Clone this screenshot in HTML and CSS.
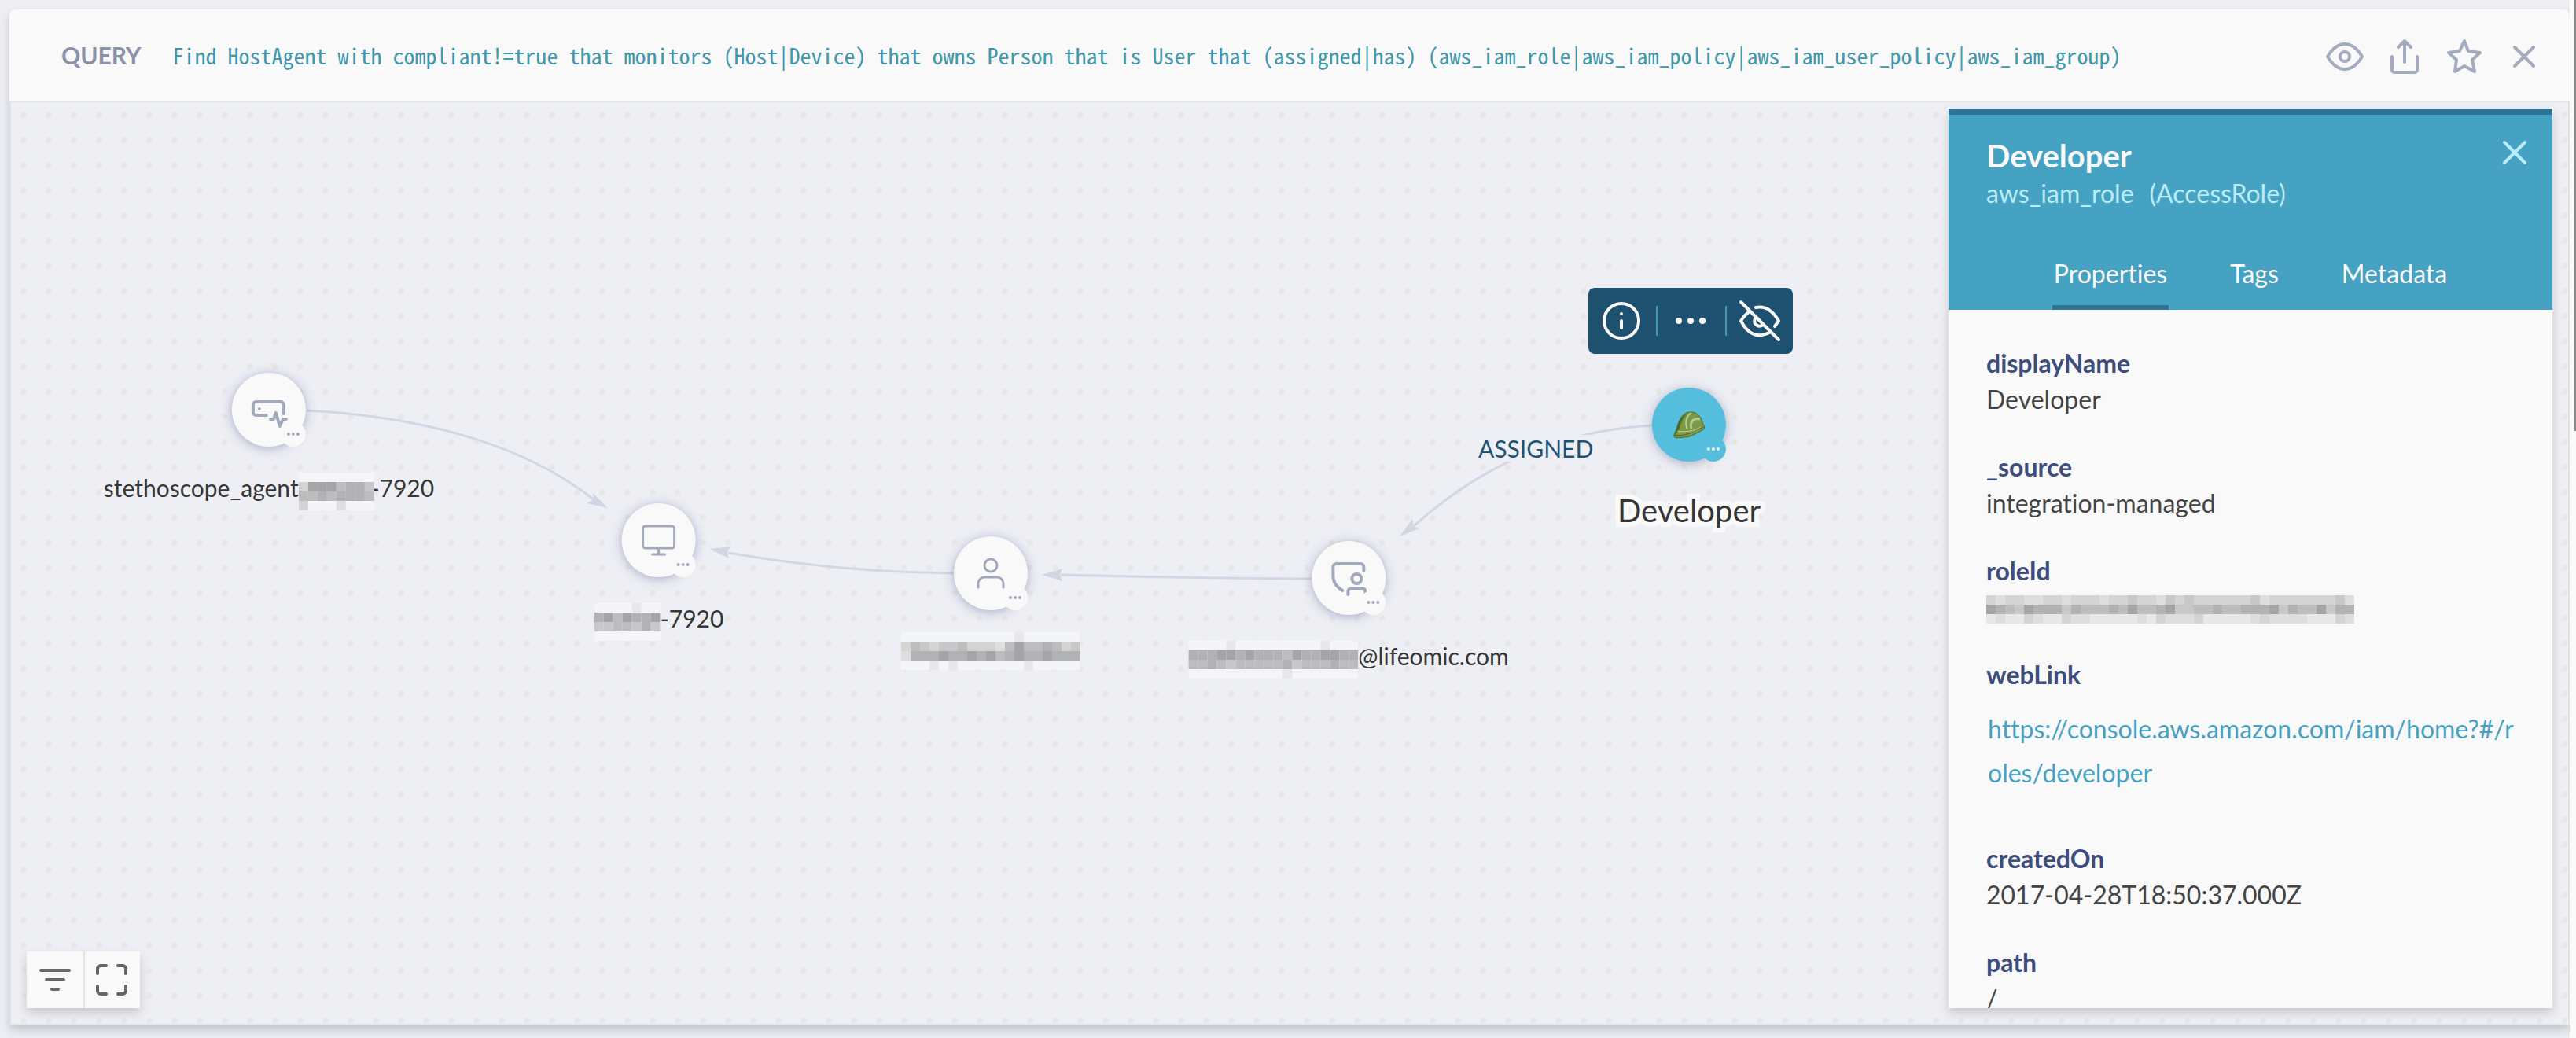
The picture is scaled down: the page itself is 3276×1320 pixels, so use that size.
FILE: index.html
```html
<!DOCTYPE html>
<html lang="en">
<head>
<meta charset="utf-8">
<title>Query graph</title>
<link rel="stylesheet" href="styles.css">
</head>
<body>
<main class="card">
  <header class="query-bar">
    <div class="query">
      <span class="query-label">QUERY</span>
      <code class="query-text">Find HostAgent with compliant!=true that monitors (Host|Device) that owns Person that is User that (assigned|has) (aws_iam_role|aws_iam_policy|aws_iam_user_policy|aws_iam_group)</code>
    </div>
    <div class="actions">
      <button class="icon-button" aria-label="Show"><svg width="48" height="48" viewBox="0 0 48 48" class="line"><path d="M2 24C8 14 15 8 24 8s16 6 22 16C40 34 33 40 24 40S8 34 2 24z"/><circle cx="24" cy="24" r="6"/></svg></button>
      <button class="icon-button" aria-label="Share"><svg width="48" height="48" viewBox="0 0 48 48" class="line"><path d="M8 24v17a3 3 0 0 0 3 3h26a3 3 0 0 0 3-3V24M24 31V4M16 12l8-8 8 8"/></svg></button>
      <button class="icon-button" aria-label="Favorite"><svg width="48" height="48" viewBox="0 0 48 48" class="line"><path d="M24 4L18 17 4 19 14 28 12 43 24 36 37 43 34 28 44 19 29 17z"/></svg></button>
      <button class="icon-button" aria-label="Close"><svg width="48" height="48" viewBox="0 0 48 48" class="line"><path d="M12 12l24 24M36 12L12 36"/></svg></button>
    </div>
  </header>

  <section class="canvas">
    <svg class="edges" width="100%" height="100%">
      <g class="edge"><path d="M376 392Q614 405 742 506"/><path d="M1199 599Q1056 598 912 573"/><path d="M1655 606Q1490 605 1335 601"/><path d="M2088 411Q1916 420 1784 539"/></g>
      <g class="heads"><path d="M759 516l-19-19 1 8-9 5z"/><path d="M888 568l27-3-4 7 2 8z"/><path d="M1311 601l26-8-3 8 3 8z"/><path d="M1766 552l16-22 2 9 7 3z"/></g>
    </svg>

    <span class="edge-label">ASSIGNED</span>

    <div class="node agent">
      <div class="disc"><svg width="94" height="94" viewBox="0 0 94 94"><path class="line" d="M44 54H31a4 4 0 0 1-4-4V41a4 4 0 0 1 4-4H62a4 4 0 0 1 4 4V52M49 59h4l3-8 5 17 4-9h4"/><circle class="dot" cx="35" cy="46" r="2"/></svg><button class="badge" aria-label="More"><i></i><i></i><i></i></button></div>
      <div class="label"><span>stethoscope_agent_</span><svg class="mosaic tuck" data-rows="ffffffff|c888a99b|aa9a999a|cfffdfff"></svg><span>-7920</span></div>
    </div>
    <div class="node host">
      <div class="disc"><svg width="94" height="94" viewBox="0 0 94 94"><g class="line thin"><rect x="27" y="29" width="40" height="28" rx="3"/><path d="M47 57v8M39 65h16"/></g></svg><button class="badge" aria-label="More"><i></i><i></i><i></i></button></div>
      <div class="label"><svg class="mosaic" data-rows="ffffeff|98a8998|bbaab9b|fffffff"></svg><span>-7920</span></div>
    </div>
    <div class="node person">
      <div class="disc"><svg width="94" height="94" viewBox="0 0 94 94"><g class="line thin"><circle cx="47" cy="37" r="8"/><path d="M31 65v-5a8 8 0 0 1 8-8H55a8 8 0 0 1 8 8v5"/></g></svg><button class="badge" aria-label="More"><i></i><i></i><i></i></button></div>
      <div class="label"><svg class="mosaic" data-rows="ffffffffffffeffffff|cabcbbacccda8aa9acb|d999899898a98998999|fffefefffffffefffff"></svg></div>
    </div>
    <div class="node user">
      <div class="disc"><svg width="94" height="94" viewBox="0 0 94 94"><path class="line" d="M39 63C31 58 27 53 27 44V33a4 4 0 0 1 4-4H62a4 4 0 0 1 4 4V38M46 68v-4a4 4 0 0 1 4-4H64a4 4 0 0 1 4 4v4"/><circle class="line" cx="57" cy="48" r="6"/></svg><button class="badge" aria-label="More"><i></i><i></i><i></i></button></div>
      <div class="label"><svg class="mosaic" data-rows="ffffefffffffffefff|9998898999a8998899|aa9abaaaaa9baaa9aa|ffffffffffefffffff"></svg><span>@lifeomic.com</span></div>
    </div>
    <div class="node role">
      <div class="disc"><svg width="94" height="94" viewBox="0 0 94 94"><path d="M28 62C28 57 32 53 33 47 36 36 42 31 49 31 58 31 63 37 65 47 68 50 67 53 64 54 57 57 50 63 41 63 34 64 29 64 28 62z" fill="#7b9a48" stroke="#4d6a2c"/><path d="M29 60C31 55 31 48 35 42 39 36 43 33 46 32 39 38 36 46 34 55z" fill="#4d6a2c"/><path d="M28 60C36 62 45 59 52 57M58 53L66 50" fill="none" stroke="#4d6a2c"/><path d="M32 55C42 57 54 55 62 50" fill="none" stroke="#c2d19b"/><path d="M50 32C43 37 42 45 45 53" fill="none" stroke="#b9c98f" stroke-width="2"/><path d="M50 52C48 43 53 38 61 40" fill="none" stroke="#b9c98f" stroke-width="3"/></svg><button class="badge" aria-label="More"><i></i><i></i><i></i></button></div>
      <div class="label">Developer</div>
    </div>

    <div class="toolbar">
      <button aria-label="Info"><svg width="56" height="56" viewBox="0 0 56 56"><g class="line"><circle cx="28" cy="28" r="22"/><path d="M28 28v9"/></g><circle class="dot" cx="28" cy="19" r="2"/></svg></button>
      <button aria-label="More"><svg width="56" height="56" viewBox="0 0 56 56"><g class="dot"><circle cx="13" cy="28" r="4"/><circle cx="28" cy="28" r="4"/><circle cx="43" cy="28" r="4"/></g></svg></button>
      <button aria-label="Hide"><svg width="56" height="56" viewBox="0 0 56 56"><path class="line" d="M4 4l48 48M23 11c13-3 22 5 29 17l-5 7M15 16C9 20 6 25 4 28c9 18 22 22 36 15M22 25c-3 8 5 12 10 8"/></svg></button>
    </div>

    <div class="controls">
      <button aria-label="Filter"><svg width="48" height="48" viewBox="0 0 48 48"><path class="line" d="M6 12H42M13 24H35M20 36H28"/></svg></button>
      <button aria-label="Full screen"><svg width="48" height="48" viewBox="0 0 48 48"><path class="line" d="M6 16V10a4 4 0 0 1 4-4H17M32 6h6a4 4 0 0 1 4 4v6M42 32v6a4 4 0 0 1-4 4H32M17 42H10a4 4 0 0 1-4-4V32"/></svg></button>
    </div>

    <aside class="panel">
      <header class="panel-head">
        <div class="panel-title">
          <div>
            <h2>Developer</h2>
            <p class="kind"><span>aws_iam_role</span><span>(AccessRole)</span></p>
          </div>
          <button class="icon-button" aria-label="Close panel"><svg width="48" height="48" viewBox="0 0 48 48" class="line"><path d="M11 7l26 26M37 7L11 33"/></svg></button>
        </div>
        <nav class="tabs"><button class="active">Properties</button><button>Tags</button><button>Metadata</button></nav>
      </header>
      <dl class="props">
        <div><dt>displayName</dt><dd>Developer</dd></div>
        <div><dt>_source</dt><dd>integration-managed</dd></div>
        <div><dt>roleId</dt><dd class="redacted"><svg class="mosaic" data-rows="cdccddccdcccdccbccdbcbccccccbdcccccccbd|89ab8999b9aaa9a8aa98bbaa9aa9998b9aa8b99|edeecdeecddeeeeedecdddceeeeedcddddeeecd"></svg></dd></div>
        <div><dt>webLink</dt><dd class="link"><a href="https://console.aws.amazon.com/iam/home?#/roles/developer">https://console.aws.amazon.com/iam/home?#/roles/developer</a></dd></div>
        <div><dt>createdOn</dt><dd>2017-04-28T18:50:37.000Z</dd></div>
        <div><dt>path</dt><dd>/</dd></div>
      </dl>
    </aside>
  </section>
</main>
<div class="scrollbar"><div class="thumb"></div></div>
<script src="mosaic.js"></script>
</body>
</html>
```
FILE: mosaic.js
```js
// Fills each redaction block with 12px grey cells, one hex digit per cell.
document.querySelectorAll('.mosaic').forEach(function (svg) {
  var rows = svg.dataset.rows.split('|');
  var out = '';
  var tones = { f: '#f4f5f9', e: '#e8e8eb', d: '#dedee0', c: '#d4d4d5', b: '#c8c8ca', a: '#bcbdbf', 9: '#b1b2b4', 8: '#a5a5a7' };
  rows.forEach(function (row, y) {
    row.split('').forEach(function (cell, x) {
      out += '<rect x="' + x * 12 + '" y="' + y * 12 + '" width="12" height="12" fill="' + tones[cell] + '"/>';
    });
  });
  svg.setAttribute('width', rows[0].length * 12);
  svg.setAttribute('height', rows.length * 12);
  svg.innerHTML = out;
});
```
FILE: styles.css
```css
* { box-sizing: border-box; }
body {
  margin: 0;
  height: 100vh;
  display: flex;
  background: #eeeff4;
  font-family: Lato, sans-serif;
  font-size: 32px;
  font-variant-ligatures: none;
  color: #444;
  overflow: hidden;
}
button { border: 0; padding: 0; background: none; font: inherit; color: inherit; display: block; }
svg { display: block; }
.line { fill: none; stroke: currentColor; stroke-width: 4; stroke-linecap: round; stroke-linejoin: round; }
.thin { stroke-width: 3; }
.dot { fill: currentColor; }

.card {
  flex: 1;
  min-width: 0;
  margin: 12px 0 16px 12px;
  display: flex;
  flex-direction: column;
  border-radius: 8px 8px 0 0;
  box-shadow: 0 6px 12px rgba(60, 65, 85, .24);
}
.query-bar {
  display: flex;
  justify-content: space-between;
  align-items: center;
  min-height: 116px;
  padding: 0 34px 0 64px;
  background: #f9f9f9;
  border-radius: 8px 8px 0 0;
}
.query { display: flex; align-items: baseline; gap: 40px; padding-left: 2px; }
.query-label { font-size: 30px; font-weight: 700; color: #8a91a8; }
.query-text { font-family: "Noto Sans Mono CJK SC", monospace; font-size: 28px; color: #3f98ac; }
.actions { display: flex; gap: 28px; padding-top: 4px; color: #a5abbe; }

.canvas {
  position: relative;
  flex: 1;
  min-height: 0;
  display: flex;
  justify-content: space-between;
  padding: 8px 20px 20px;
  border: 2px solid #e2e3e9;
  background: #eeeff4 radial-gradient(circle, #e7e7e6 3px, transparent 4px) 0 0 / 32px 32px;
}
.edges { position: absolute; left: 0; top: 0; }
.edge { fill: none; stroke: #d5d6e3; stroke-width: 3; }
.heads { fill: #d3d5e2; }
.edge-label {
  position: absolute;
  left: 1864px;
  top: 423px;
  padding: 0 2px;
  font-size: 30px;
  line-height: 34px;
  color: #1e5374;
  background: #eeeff4;
}

.node {
  position: absolute;
  display: flex;
  flex-direction: column;
  align-items: center;
  gap: 28px;
  transform: translateX(-50%);
  color: #a3a9bc;
}
.disc { position: relative; width: 94px; height: 94px; border-radius: 50%; background: #f9f9f9; box-shadow: 0 2px 14px rgba(100, 105, 160, .5); }
.badge {
  position: absolute;
  right: 0;
  bottom: 0;
  width: 32px;
  height: 32px;
  border-radius: 50%;
  display: flex;
  align-items: center;
  justify-content: center;
  gap: 2px;
  background: #f9f9f9;
}
.badge i { width: 4px; height: 4px; border-radius: 50%; background: currentColor; }
.label { display: flex; align-items: flex-start; font-size: 30px; line-height: 48px; color: #363636; white-space: nowrap; }
.label .mosaic:not(:only-child) { position: relative; margin-top: 5px; }
.tuck { margin-left: -14px; margin-right: -4px; }
.agent { left: 328px; top: 344px; }
.host { left: 824px; top: 510px; }
.person { left: 1246px; top: 552px; }
.user { left: 1701px; top: 558px; }
.role { left: 2134px; top: 363px; color: #f9f9f9; gap: 38px; }
.role .disc, .role .badge { background: #54bedc; }
.role .label { font-size: 40px; -webkit-text-stroke: 12px #f9f9f9; paint-order: stroke fill; stroke-linejoin: round; }

.toolbar {
  position: absolute;
  left: 2006px;
  top: 236px;
  display: flex;
  align-items: center;
  padding: 14px 0;
  border-radius: 8px;
  background: #1e5070;
  color: #f9f9f9;
}
.toolbar button { padding: 0 16px 0 14px; }
.toolbar button + button { background: linear-gradient(#3f9bb8, #3f9bb8) 0 50% / 2px 38px no-repeat; padding: 0 16px; }
.toolbar button:last-child { padding: 0 14px 0 16px; }

.controls { position: relative; align-self: flex-end; display: flex; background: #f9f9f9; color: #666; box-shadow: 0 6px 12px rgba(0, 0, 0, .16); }
.controls button { padding: 12px; }
.controls button + button { border-left: 2px solid #e4e4e6; padding: 12px 12px 12px 10px; }

.panel {
  position: relative;
  width: 768px;
  display: flex;
  flex-direction: column;
  overflow: hidden;
  background: #f9f9f9;
  box-shadow: 0 6px 12px rgba(0, 0, 0, .16);
}
.panel-head { padding: 28px 24px 0 48px; border-top: 8px solid #2d7592; background: #46a2c3; color: #f9f9f9; }
.panel-title { display: flex; justify-content: space-between; align-items: flex-start; color: #b9ecf7; }
h2 { margin: 0; font-size: 40px; line-height: 48px; color: #f9f9f9; }
.kind { margin: 0; display: flex; gap: 20px; line-height: 48px; }
.tabs { display: flex; justify-content: center; gap: 76px; padding-right: 24px; margin-top: 58px; }
.tabs button { padding: 0 2px 26px; line-height: 40px; }
.tabs .active { background: linear-gradient(#2d7592, #2d7592) 0 100% / 100% 6px no-repeat; }
.props { margin: 0; padding: 45px 48px 0; display: flex; flex-direction: column; gap: 40px; line-height: 46px; }
dt { font-weight: 700; color: #3d4d7c; }
dd { margin: 0; min-height: 46px; }
.redacted { padding-top: 8px; }
.link { padding: 18px 0 18px 2px; line-height: 56px; word-break: break-all; }
a { color: #46a2c3; text-decoration: none; }

.scrollbar { width: 8px; border-left: 1px solid #d9d9dc; background: #fafafa; display: flex; justify-content: flex-end; }
.thumb { width: 2px; height: 548px; background: #8c8c8c; }
```
